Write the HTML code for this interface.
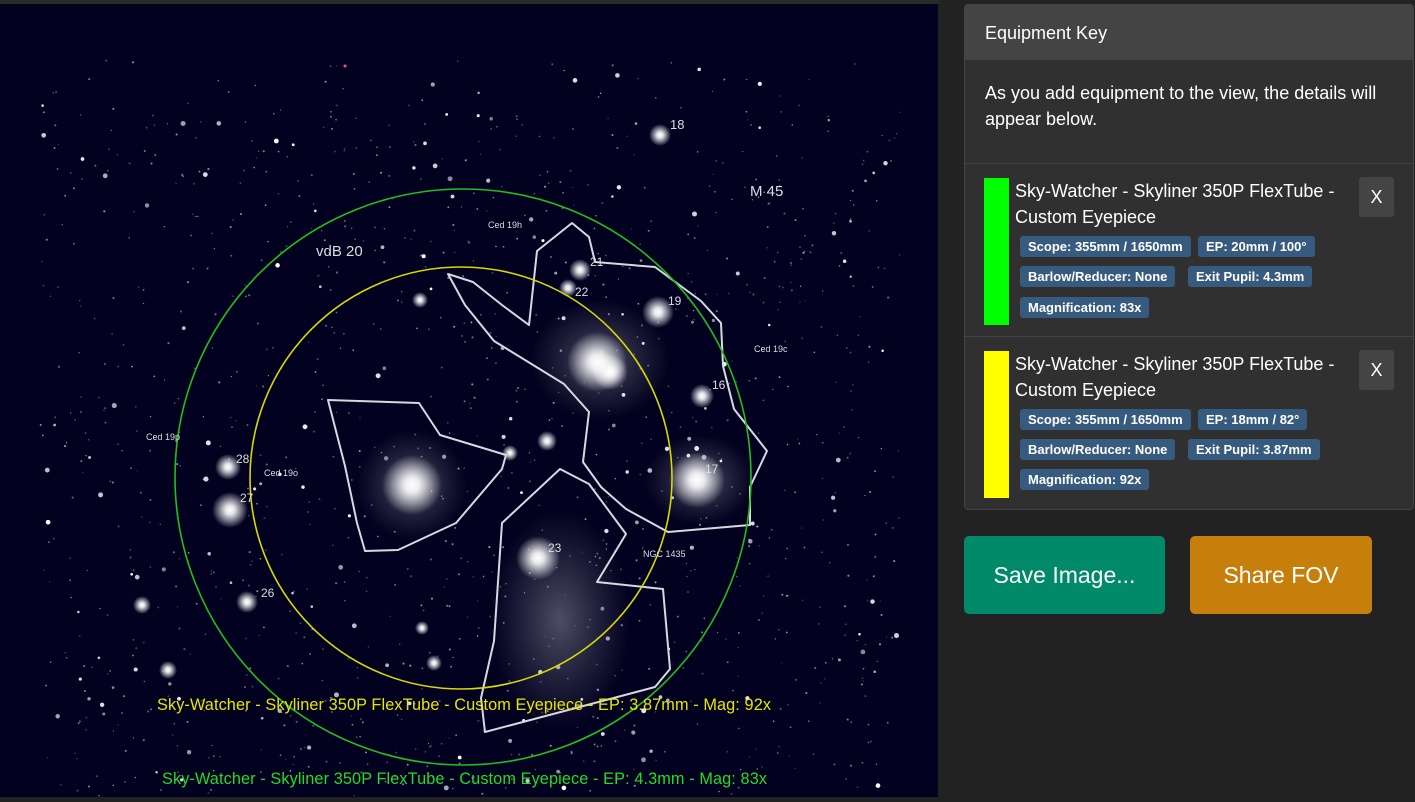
<!DOCTYPE html>
<html><head><meta charset="utf-8">
<style>
*{margin:0;padding:0;box-sizing:border-box}
body{width:1415px;height:797px;background:#222;overflow:hidden;font-family:"Liberation Sans",sans-serif;position:relative}
#sky{position:absolute;left:0;top:4px;width:938px;height:793px;background:#020220}
.panel{position:absolute;left:964px;top:4px;width:450px;height:506px;background:#303030;border:1px solid #444;border-radius:4px;color:#fff;overflow:hidden}
.hdr{height:55px;background:#444;font-size:18px;padding:18px 20px 0}
.intro{font-size:18px;line-height:26px;padding:20px 20px 0;height:104px;border-bottom:1px solid #444}
.item{position:relative;height:173px;border-bottom:1px solid #444}
.bar{position:absolute;left:19px;top:14px;width:25px;height:147px}
.ttl{position:absolute;left:50px;top:14px;font-size:18px;line-height:26px;width:330px}
.x{position:absolute;left:394px;top:13px;width:35px;height:40px;background:#444;border-radius:3px;font-size:18px;text-align:center;line-height:40px}
.bd{position:absolute;height:21px;background:#375a7f;border-radius:3px;font-size:13px;font-weight:bold;line-height:21px;padding:0 8px}
.btn{position:absolute;top:536px;height:78px;border-radius:5px;color:#fff;font-size:23px;text-align:center;line-height:78px}
</style></head><body>
<div id="sky">
<svg width="938" height="793" viewBox="0 4 938 793" xmlns="http://www.w3.org/2000/svg">
<defs>
<radialGradient id="g"><stop offset="0" stop-color="#fff"/><stop offset=".25" stop-color="#fff" stop-opacity=".9"/><stop offset="1" stop-color="#fff" stop-opacity="0"/></radialGradient>
<radialGradient id="n"><stop offset="0" stop-color="#aab" stop-opacity=".45"/><stop offset="1" stop-color="#889" stop-opacity="0"/></radialGradient>
</defs>
<g id="stars"></g>
<ellipse cx="560" cy="620" rx="70" ry="110" fill="url(#n)"/>
<ellipse cx="600" cy="360" rx="70" ry="60" fill="url(#n)"/>
<ellipse cx="412" cy="485" rx="55" ry="55" fill="url(#n)"/>
<ellipse cx="700" cy="480" rx="55" ry="45" fill="url(#n)"/>
<g fill="url(#g)">
<circle cx="412" cy="485" r="30"/><circle cx="697" cy="480" r="28"/><circle cx="597" cy="362" r="30"/><circle cx="610" cy="372" r="18"/>
<circle cx="538" cy="558" r="22"/><circle cx="658" cy="312" r="16"/><circle cx="230" cy="510" r="18"/><circle cx="228" cy="467" r="13"/>
<circle cx="580" cy="270" r="11"/><circle cx="568" cy="288" r="9"/><circle cx="702" cy="396" r="12"/><circle cx="660" cy="135" r="11"/>
<circle cx="547" cy="441" r="10"/><circle cx="142" cy="605" r="9"/><circle cx="247" cy="602" r="11"/><circle cx="168" cy="670" r="9"/>
<circle cx="420" cy="300" r="8"/><circle cx="510" cy="453" r="8"/><circle cx="434" cy="663" r="8"/><circle cx="422" cy="628" r="7"/>
</g>
<g fill="none" stroke="#d8d8e0" stroke-width="2" stroke-linejoin="round">
<path d="M595,262 L655,267 701,301 721,323 723,366 734,409 767,451 750,487 750,525 668,532 626,509 601,487 583,462 589,412 564,384 494,341 465,305 448,274 473,282 502,305 529,325 537,251 572,223 589,237 Z"/>
<path d="M328,400 L419,403 440,435 506,455 502,469 456,523 398,550 365,551 357,523 345,466 Z"/>
<path d="M560,469 L589,484 626,534 597,582 663,589 670,669 655,687 485,732 481,698 494,641 502,523 Z"/>
</g>
<circle cx="463" cy="477" r="288" fill="none" stroke="#1fbf1f" stroke-width="1.6"/>
<circle cx="461" cy="478" r="211" fill="none" stroke="#d8d800" stroke-width="1.6"/>
<g fill="#ddd" font-family="Liberation Sans,sans-serif">
<text x="670" y="129" font-size="13">18</text><text x="750" y="196" font-size="15">M 45</text>
<text x="316" y="256" font-size="15">vdB 20</text><text x="488" y="228" font-size="9">Ced 19h</text>
<text x="590" y="266" font-size="12">21</text><text x="575" y="296" font-size="12">22</text><text x="668" y="305" font-size="12">19</text>
<text x="754" y="352" font-size="9">Ced 19c</text><text x="712" y="389" font-size="12">16</text><text x="705" y="473" font-size="12">17</text>
<text x="146" y="440" font-size="9">Ced 19p</text><text x="236" y="463" font-size="12">28</text><text x="240" y="502" font-size="12">27</text>
<text x="264" y="476" font-size="9">Ced 19o</text><text x="548" y="552" font-size="12">23</text><text x="643" y="557" font-size="9">NGC 1435</text>
<text x="261" y="597" font-size="12">26</text>
</g>
<text x="157" y="710" font-size="16.3" fill="#e6e600" font-family="Liberation Sans,sans-serif" textLength="614">Sky-Watcher - Skyliner 350P FlexTube - Custom Eyepiece - EP: 3.87mm - Mag: 92x</text>
<text x="162" y="784" font-size="16.3" fill="#22dd22" font-family="Liberation Sans,sans-serif" textLength="605">Sky-Watcher - Skyliner 350P FlexTube - Custom Eyepiece - EP: 4.3mm - Mag: 83x</text>
</svg></div>
<div style="position:absolute;left:0;top:0;width:940px;height:4px;background:#2a2a2a"></div>
<div class="panel">
<div class="hdr">Equipment Key</div>
<div class="intro">As you add equipment to the view, the details will appear below.</div>
<div class="item">
<div class="bar" style="background:#00ff00"></div>
<div class="ttl">Sky-Watcher - Skyliner 350P FlexTube - Custom Eyepiece</div>
<div class="x">X</div>
<div class="bd" style="left:55px;top:72px">Scope: 355mm / 1650mm</div>
<div class="bd" style="left:233px;top:72px">EP: 20mm / 100°</div>
<div class="bd" style="left:55px;top:102px">Barlow/Reducer: None</div>
<div class="bd" style="left:223px;top:102px">Exit Pupil: 4.3mm</div>
<div class="bd" style="left:55px;top:133px">Magnification: 83x</div>
</div>
<div class="item" style="border-bottom:none">
<div class="bar" style="background:#ffff00"></div>
<div class="ttl">Sky-Watcher - Skyliner 350P FlexTube - Custom Eyepiece</div>
<div class="x">X</div>
<div class="bd" style="left:55px;top:72px">Scope: 355mm / 1650mm</div>
<div class="bd" style="left:233px;top:72px">EP: 18mm / 82°</div>
<div class="bd" style="left:55px;top:102px">Barlow/Reducer: None</div>
<div class="bd" style="left:223px;top:102px">Exit Pupil: 3.87mm</div>
<div class="bd" style="left:55px;top:132px">Magnification: 92x</div>
</div>
</div>
<div class="btn" style="left:964px;width:201px;background:#008a6a">Save Image...</div>
<div class="btn" style="left:1190px;width:182px;background:#c77f0b">Share FOV</div>
<script>
var s=12345;function r(){s=(s*1103515245+12345)%2147483648;return s/2147483648;}
var g=document.getElementById('stars'),h='';
for(var i=0;i<1300;i++){var x=40+r()*860,y=60+r()*737;if(y<110&&r()<.6)continue;var k=r();var rad=k<.88?0.6+r()*0.5:1.2+r()*1.4;var o=k<.88?0.2+r()*0.4:0.5+r()*0.5;
h+='<circle cx="'+x.toFixed(1)+'" cy="'+y.toFixed(1)+'" r="'+rad.toFixed(2)+'" fill="#fff" fill-opacity="'+o.toFixed(2)+'"/>';}
h+='<circle cx="345" cy="66" r="1.5" fill="#f48"/>';
g.innerHTML=h;
</script>
</body></html>
